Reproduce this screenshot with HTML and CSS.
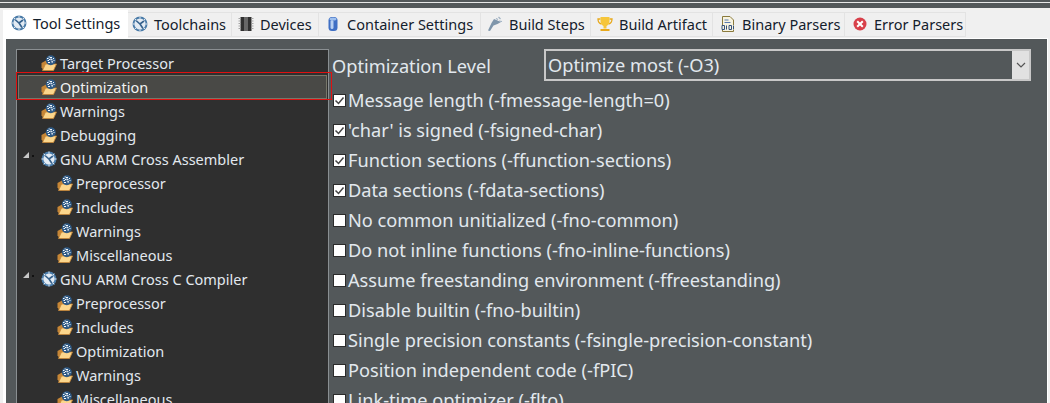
FILE: index.html
```html
<!DOCTYPE html>
<html lang="en">
<head>
    <meta charset="UTF-8">
    <title>Tool Settings</title>
    <link rel="stylesheet" href="styles.css">
</head>
<body>
    <svg class="defs" width="0" height="0">
        <symbol id="gear" viewBox="0 0 16 16">
            <circle cx="8" cy="8" r="7.500" fill="#4a7ba8"/>
            <circle cx="8" cy="8" r="5.600" fill="#e3ebf3"/>
            <path d="M4 4.500 8 8l4-3M8 8l3 4.500" stroke="#35618c" stroke-width="1.600" fill="none"/>
            <path d="M8 .5v2M.5 8h2M13.500 8h2M8 13.500v2M2.700 2.700l1.500 1.500M13.300 13.300l-1.500-1.500M13.300 2.700l-1.500 1.500M2.700 13.300l1.500-1.500" stroke="#dfe8f0" stroke-width="1"/>
        </symbol>
        <symbol id="folder" viewBox="0 0 16 16">
            <path d="M.5 8 5 5.500h2V15H2.500L.5 12.500z" fill="#c68636"/>
            <path d="M1.500 15.500 4.500 9H15.500L12.500 15.500z" fill="#fbd68c" stroke="#c68636" stroke-width=".8"/>
            <circle cx="9.800" cy="5.200" r="5" fill="#2f5a85"/>
            <path d="M6 3.500h1.500M9 2.500h2M12 3.500h1M6.500 5.500h1.500M9.500 4.800h2M12.500 5.500h1M7 7.500h2M10.500 7h1.500M8.200 1.500v1M10 3.500v1M8.500 4v1M11 6v1" stroke="#f4f7fa" stroke-width="1.100"/>
        </symbol>
        <symbol id="chip" viewBox="0 0 16 16">
            <path d="M2.500 1h11v14h-11z" fill="#2f2f2f"/>
            <path d="M6 1h4v14H6z" fill="#666"/>
            <path d="M.5 2.500h2M.5 5h2M.5 7.500h2M.5 10h2M.5 12.500h2M13.500 2.500h2M13.500 5h2M13.500 7.500h2M13.500 10h2M13.500 12.500h2" stroke="#a5a5a5"/>
        </symbol>
        <symbol id="cylinder" viewBox="0 0 16 16">
            <rect x="3.500" y="1" width="9" height="14" rx="3.500" fill="#3f6fc4"/>
            <rect x="5.500" y="4" width="3" height="9" rx="1.500" fill="#b8d0f2"/>
            <ellipse cx="8" cy="3" rx="3.500" ry="1.500" fill="#9fc0ee"/>
        </symbol>
        <symbol id="brush" viewBox="0 0 16 16">
            <path d="M1 14.500 4.500 7 7 3l7 3-3.500 2-4 1.500L3 15z" fill="#7f96ab"/>
            <path d="M9 2.500l2 1M11.500 1l2 2M12 5l3 .5" stroke="#9fb1c2" stroke-width="1.200"/>
        </symbol>
        <symbol id="trophy" viewBox="0 0 16 16">
            <path d="M3.500 3H1c0 3 1 4.500 3.500 5M12.500 3H15c0 3-1 4.500-3.500 5" fill="none" stroke="#e8a91c" stroke-width="1.300"/>
            <path d="M3.500 1h9v4c0 3-2 4.500-3 5v2.500h-3V10c-1-.5-3-2-3-5z" fill="#f6c63a"/>
            <path d="M3.500 13h9v2h-9z" fill="#e8a91c"/>
        </symbol>
        <symbol id="binary" viewBox="0 0 16 16">
            <path d="M2.500 .5h7.500l3.500 3.500v11.500h-11z" fill="#f7f3df" stroke="#8a7a3c"/>
            <path d="M4.500 4h4M4.500 6.500h6" stroke="#5a7ab0"/>
            <path d="M1 9h14v5H1z" fill="#f7f3df"/>
            <path d="M2 9.500h2.500v4H2zM6.500 9.500v4M9 9.500h2.500v4H9zM13.500 9.500v4" fill="none" stroke="#34507c"/>
        </symbol>
        <symbol id="error" viewBox="0 0 16 16">
            <circle cx="8" cy="8" r="6.500" fill="#d8404a"/>
            <path d="M5.200 5.200l5.600 5.600M10.800 5.200l-5.600 5.600" stroke="#fff" stroke-width="2"/>
        </symbol>
    </svg>

    <div class="topbar"></div>

    <div class="tabs">
        <div class="tab active"><svg class="icon"><use href="#gear"/></svg>Tool Settings</div>
        <div class="tab w-chains"><svg class="icon"><use href="#gear"/></svg>Toolchains</div>
        <div class="tab w-devices"><svg class="icon"><use href="#chip"/></svg>Devices</div>
        <div class="tab w-container"><svg class="icon"><use href="#cylinder"/></svg>Container Settings</div>
        <div class="tab w-steps"><svg class="icon"><use href="#brush"/></svg>Build Steps</div>
        <div class="tab w-artifact"><svg class="icon"><use href="#trophy"/></svg>Build Artifact</div>
        <div class="tab w-binary"><svg class="icon"><use href="#binary"/></svg>Binary Parsers</div>
        <div class="tab w-error"><svg class="icon"><use href="#error"/></svg>Error Parsers</div>
    </div>

    <div class="panel">
        <ul class="tree">
            <li class="row"><svg class="icon"><use href="#folder"/></svg>Target Processor</li>
            <li class="row selected"><svg class="icon"><use href="#folder"/></svg>Optimization</li>
            <li class="row"><svg class="icon"><use href="#folder"/></svg>Warnings</li>
            <li class="row"><svg class="icon"><use href="#folder"/></svg>Debugging</li>
            <li class="row parent"><span class="arrow"></span><svg class="icon"><use href="#gear"/></svg>GNU ARM Cross Assembler</li>
            <li class="row child"><svg class="icon"><use href="#folder"/></svg>Preprocessor</li>
            <li class="row child"><svg class="icon"><use href="#folder"/></svg>Includes</li>
            <li class="row child"><svg class="icon"><use href="#folder"/></svg>Warnings</li>
            <li class="row child"><svg class="icon"><use href="#folder"/></svg>Miscellaneous</li>
            <li class="row parent"><span class="arrow"></span><svg class="icon"><use href="#gear"/></svg>GNU ARM Cross C Compiler</li>
            <li class="row child"><svg class="icon"><use href="#folder"/></svg>Preprocessor</li>
            <li class="row child"><svg class="icon"><use href="#folder"/></svg>Includes</li>
            <li class="row child"><svg class="icon"><use href="#folder"/></svg>Optimization</li>
            <li class="row child"><svg class="icon"><use href="#folder"/></svg>Warnings</li>
            <li class="row child"><svg class="icon"><use href="#folder"/></svg>Miscellaneous</li>
        </ul>

        <div class="settings">
            <div class="level">
                <span class="level-label">Optimization Level</span>
                <div class="select">
                    <span class="select-value">Optimize most (-O3)</span>
                    <span class="select-btn">
                        <svg width="10" height="6" viewBox="0 0 10 6"><path d="M1 1l4 4 4-4" fill="none" stroke="#555" stroke-width="1.200"/></svg>
                    </span>
                </div>
            </div>
            <label class="check on">Message length (-fmessage-length=0)</label>
            <label class="check on">'char' is signed (-fsigned-char)</label>
            <label class="check on">Function sections (-ffunction-sections)</label>
            <label class="check on">Data sections (-fdata-sections)</label>
            <label class="check">No common unitialized (-fno-common)</label>
            <label class="check">Do not inline functions (-fno-inline-functions)</label>
            <label class="check">Assume freestanding environment (-ffreestanding)</label>
            <label class="check">Disable builtin (-fno-builtin)</label>
            <label class="check">Single precision constants (-fsingle-precision-constant)</label>
            <label class="check">Position independent code (-fPIC)</label>
            <label class="check">Link-time optimizer (-flto)</label>
        </div>
    </div>
</body>
</html>
```

FILE: styles.css
```css
html, body {
    height: 100%;
}
body {
    margin: 0;
    overflow: hidden;
    background: #f0f0f0;
    font-family: "Noto Sans", sans-serif;
    display: flex;
    flex-direction: column;
}
.defs {
    position: absolute;
}
.icon {
    width: 16px;
    height: 16px;
    flex: none;
}

.topbar {
    height: 5px;
    margin: 2px 0 1px;
    background: #53585a;
    border-top: 1px solid #e8e8e8;
    box-shadow: 0 -2px 0 #53585a;
    flex: none;
}

.tabs {
    display: flex;
    height: 29px;
    padding-left: 3px;
    flex: none;
    font-size: 14.500px;
    color: #14202c;
    box-sizing: border-box;
}
.tab {
    display: flex;
    align-items: center;
    gap: 6px;
    height: 25px;
    margin-top: 3px;
    padding: 0 0 1px 6px;
    box-sizing: border-box;
    border: 1px solid #e3e3e3;
    border-left: none;
    background: #f0f0f0;
}
.tab.active {
    width: 125px;
    height: 29px;
    margin-top: 1px;
    padding-left: 8px;
    padding-bottom: 4px;
    background: #fff;
    border: none;
}
.w-chains { width: 104px; padding-left: 4px; }
.w-devices { width: 87px; }
.w-container { width: 162px; }
.w-steps { width: 110px; }
.w-artifact { width: 122px; }
.w-binary { width: 132px; padding-left: 7px; }
.w-error { width: 121px; padding-left: 7px; }

.panel {
    flex: 1;
    min-height: 0;
    display: flex;
    margin: 0 2px 0 3px;
    padding: 10px 0 0 10px;
    background: #53585a;
    border-style: solid;
    border-color: #fff;
    border-width: 1px 1px 0 3px;
    gap: 3px;
}

.tree {
    list-style: none;
    margin: 0;
    padding: 1px 0 0;
    width: 313px;
    flex: none;
    box-sizing: border-box;
    background: #2f2f2f;
    border: 1px solid #8a8f92;
    border-bottom: none;
    color: #e2e8ee;
    font-size: 14.500px;
}
.row {
    position: relative;
    display: flex;
    align-items: center;
    gap: 3px;
    height: 24px;
    padding-left: 24px;
    box-sizing: border-box;
    white-space: nowrap;
}
.row.child {
    padding-left: 40px;
}
.row.selected {
    margin: 0 1px;
    padding-left: 22px;
    background: #494946;
    border: 1px solid #77776a;
    color: #f2f2f2;
}
.row.selected::after {
    content: "";
    position: absolute;
    top: -4px;
    bottom: -2px;
    left: -3px;
    right: -6px;
    border: 1px solid #e01010;
}
.arrow {
    position: absolute;
    left: 6px;
    top: 5px;
    width: 0;
    height: 0;
    border-left: 6px solid transparent;
    border-bottom: 6px solid #c8c8c8;
}
.arrow::after {
    content: "";
    position: absolute;
    left: 3px;
    top: 3px;
    width: 2px;
    height: 2px;
    background: #111;
}

.settings {
    flex: 1;
    min-width: 0;
    color: #e2e8ee;
    font-size: 18.200px;
}
.level {
    display: flex;
    align-items: center;
    height: 32px;
    margin-bottom: 4px;
    white-space: nowrap;
}
.level-label {
    width: 212px;
    flex: none;
    padding-top: 1px;
}
.select {
    display: flex;
    width: 487px;
    height: 32px;
    box-sizing: border-box;
    border: 2px solid #c8c8c8;
}
.select-value {
    flex: 1;
    padding-left: 2px;
    line-height: 29px;
}
.select-btn {
    width: 17px;
    display: flex;
    align-items: center;
    justify-content: center;
    background: #e1e1e1;
}

.check {
    display: flex;
    align-items: center;
    height: 30px;
    gap: 2px;
    white-space: nowrap;
}
.check::before {
    content: "";
    width: 11px;
    height: 11px;
    flex: none;
    margin-left: 1px;
    background: #fff;
    border: 1px solid #2b2b2b;
}
.check.on::before {
    background: #fff url("data:image/svg+xml,%3Csvg xmlns='http://www.w3.org/2000/svg' viewBox='0 0 11 11'%3E%3Cpath d='M1.500 5.500l3 3 5-6' fill='none' stroke='%23444' stroke-width='1.500'/%3E%3C/svg%3E") center no-repeat;
}
```
